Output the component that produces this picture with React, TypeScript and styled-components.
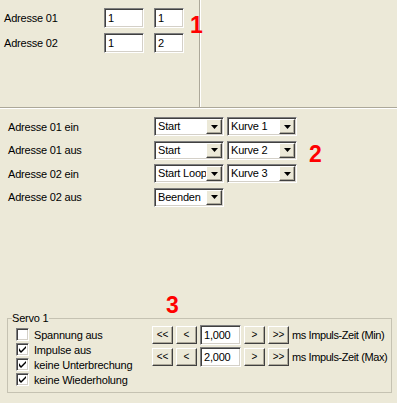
import React from 'react'
import styled, { createGlobalStyle } from 'styled-components'

const GlobalStyle = createGlobalStyle`
  html, body { margin: 0; padding: 0; background: #ece9d8; }
  body {
    font-family: 'Liberation Sans', Arial, sans-serif;
    font-size: 11px;
    color: #000;
  }
`

const Window = styled.div`
  width: 397px;
  height: 403px;
  display: flex;
  flex-direction: column;
  overflow: hidden;
  background: #ece9d8;
  letter-spacing: -0.2px;
`

const TopPanel = styled.div`
  display: flex;
  height: 107px;
`

const TopLeft = styled.div`
  width: 200px;
  border-right: 1px solid #aca899;
  padding: 8px 0 0 4px;
  box-sizing: border-box;
  display: flex;
  align-items: flex-start;
`

const TopRight = styled.div`
  flex: 1;
  border-left: 1px solid #fff;
`

const HSeparator = styled.div`
  height: 0;
  border-top: 1px solid #aca899;
  border-bottom: 1px solid #fff;
`

const Rows = styled.div<{ $gap: number }>`
  display: flex;
  flex-direction: column;
  gap: ${p => p.$gap}px;
`

const Row = styled.div<{ $gap?: number }>`
  display: flex;
  align-items: center;
  gap: ${p => p.$gap ?? 0}px;
`

const Label = styled.span<{ $w: number }>`
  width: ${p => p.$w}px;
  flex: none;
  white-space: nowrap;
`

const sunken = `
  box-sizing: border-box;
  background: #fff;
  border-style: solid;
  border-width: 1px;
  border-color: #7f7f7f #fff #fff #7f7f7f;
  box-shadow: inset 1px 1px 0 #404040, inset -1px -1px 0 #d4d0c8;
`

const TextBox = styled.div<{ $w: number; $gapAfter?: number }>`
  ${sunken}
  flex: none;
  width: ${p => p.$w}px;
  height: 20px;
  padding: 2px 0 0 3px;
  line-height: 14px;
  margin-right: ${p => p.$gapAfter ?? 0}px;
`

const Marker = styled.div<{ $top: number; $left: number }>`
  position: relative;
  z-index: 1;
  flex: none;
  font-family: 'Liberation Sans', Arial, sans-serif;
  font-weight: bold;
  font-size: 23px;
  line-height: 16px;
  height: 16px;
  color: #f00;
  letter-spacing: 0;
  margin-top: ${p => p.$top}px;
  margin-left: ${p => p.$left}px;
`

const MiddlePanel = styled.div`
  flex: 1;
  display: flex;
  align-items: flex-start;
  padding: 8px 0 0 8px;
`

const Combo = styled.div<{ $w: number }>`
  ${sunken}
  width: ${p => p.$w}px;
  height: 19px;
  display: flex;
  align-items: stretch;
  padding: 1px;
`

const ComboText = styled.span`
  flex: 1;
  padding-left: 2px;
  line-height: 15px;
  white-space: nowrap;
  overflow: hidden;
`

const raised = `
  box-sizing: border-box;
  background: #ece9d8;
  border-style: solid;
  border-width: 1px;
  border-color: #fff #404040 #404040 #fff;
  box-shadow: inset -1px -1px 0 #aca899;
`

const ComboButton = styled.div`
  ${raised}
  width: 16px;
  flex: none;
  display: flex;
  align-items: center;
  justify-content: center;
`

const Arrow = () => (
  <svg width="7" height="4" viewBox="0 0 7 4">
    <path d="M0 0h7L3.5 4z" fill="#000" />
  </svg>
)

const ComboBox = ({ value, w }: { value: string; w: number }) => (
  <Combo $w={w}>
    <ComboText>{value}</ComboText>
    <ComboButton>
      <Arrow />
    </ComboButton>
  </Combo>
)

const BottomPanel = styled.div`
  display: flex;
  flex-direction: column;
`

const GroupBox = styled.fieldset`
  margin: 0 5px 10px 7px;
  padding: 1px 0 0 4px;
  height: 80px;
  box-sizing: border-box;
  border: 1px solid #c5c2b2;
  display: flex;
  align-items: flex-start;
  min-width: 0;
`

const Legend = styled.legend`
  padding: 0;
  line-height: 11px;
`

const CheckList = styled.div`
  width: 136px;
  flex: none;
  margin-left: 4px;
  padding-top: 2px;
  display: flex;
  flex-direction: column;
`

const CheckRow = styled.div`
  display: flex;
  align-items: center;
  height: 15px;
  gap: 5px;
  white-space: nowrap;
`

const Box = styled.div`
  ${sunken}
  width: 13px;
  height: 13px;
  flex: none;
  display: flex;
  align-items: center;
  justify-content: center;
`

const Check = () => (
  <svg width="7" height="7" viewBox="0 0 7 7">
    <path d="M0 2v3l2 2 5-5V0L2 5z" fill="#000" />
  </svg>
)

const CheckBox = ({ label, checked }: { label: string; checked?: boolean }) => (
  <CheckRow>
    <Box>{checked && <Check />}</Box>
    <span>{label}</span>
  </CheckRow>
)

const Steppers = styled.div`
  flex: none;
  display: flex;
  flex-direction: column;
  gap: 2px;
`

const StepButton = styled.div`
  ${raised}
  flex: none;
  width: 21px;
  height: 18px;
  display: flex;
  align-items: center;
  justify-content: center;
  font-size: 10px;
  line-height: 1;
  letter-spacing: 0;
`

const StepLabel = styled.span`
  white-space: nowrap;
  letter-spacing: -0.4px;
`

const Stepper = ({ value, label }: { value: string; label: string }) => (
  <Row $gap={3}>
    <StepButton>&lt;&lt;</StepButton>
    <StepButton>&lt;</StepButton>
    <TextBox $w={41}>{value}</TextBox>
    <StepButton>&gt;</StepButton>
    <StepButton>&gt;&gt;</StepButton>
    <StepLabel>{label}</StepLabel>
  </Row>
)

const addresses = [
  { name: 'Adresse 01', a: '1', b: '1' },
  { name: 'Adresse 02', a: '1', b: '2' },
]

const events = [
  { name: 'Adresse 01 ein', action: 'Start', curve: 'Kurve 1' },
  { name: 'Adresse 01 aus', action: 'Start', curve: 'Kurve 2' },
  { name: 'Adresse 02 ein', action: 'Start Loop', curve: 'Kurve 3' },
  { name: 'Adresse 02 aus', action: 'Beenden' },
]

export default function App() {
  return (
    <Window>
      <GlobalStyle />
      <TopPanel>
        <TopLeft>
          <Rows $gap={5}>
            {addresses.map(r => (
              <Row key={r.name}>
                <Label $w={100}>{r.name}</Label>
                <TextBox $w={40} $gapAfter={10}>{r.a}</TextBox>
                <TextBox $w={30}>{r.b}</TextBox>
              </Row>
            ))}
          </Rows>
          <Marker $top={9} $left={6}>1</Marker>
        </TopLeft>
        <TopRight />
      </TopPanel>
      <HSeparator />
      <MiddlePanel>
        <Rows $gap={4.5}>
          {events.map(e => (
            <Row key={e.name} $gap={3}>
              <Label $w={143}>{e.name}</Label>
              <ComboBox value={e.action} w={70} />
              {e.curve && <ComboBox value={e.curve} w={70} />}
            </Row>
          ))}
        </Rows>
        <Marker $top={29} $left={12}>2</Marker>
      </MiddlePanel>
      <BottomPanel>
        <Marker $top={0} $left={166}>3</Marker>
        <GroupBox>
          <Legend>Servo 1</Legend>
          <CheckList>
            <CheckBox label="Spannung aus" />
            <CheckBox label="Impulse aus" checked />
            <CheckBox label="keine Unterbrechung" checked />
            <CheckBox label="keine Wiederholung" checked />
          </CheckList>
          <Steppers>
            <Stepper value="1,000" label="ms Impuls-Zeit (Min)" />
            <Stepper value="2,000" label="ms Impuls-Zeit (Max)" />
          </Steppers>
        </GroupBox>
      </BottomPanel>
    </Window>
  )
}
